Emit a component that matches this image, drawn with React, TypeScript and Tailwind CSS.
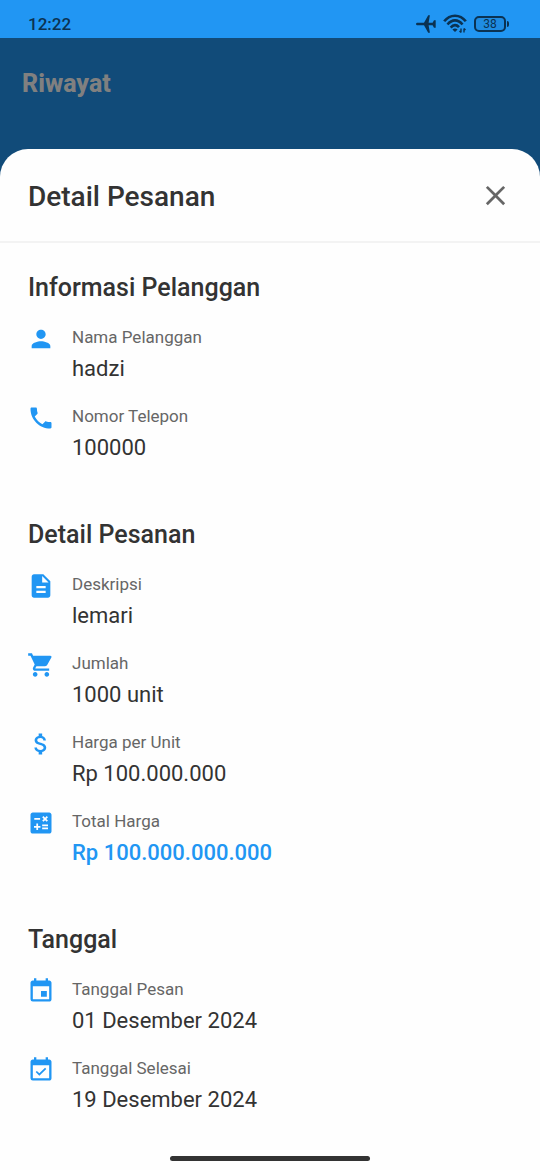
import type { ReactNode } from "react";
import type { IconType } from "react-icons";
import {
  MdAttachMoney,
  MdCalculate,
  MdClose,
  MdDescription,
  MdEvent,
  MdEventAvailable,
  MdPerson,
  MdPhone,
  MdShoppingCart,
} from "react-icons/md";

type Field = {
  icon: IconType;
  label: string;
  value: string;
  highlight?: boolean;
};

const customer: Field[] = [
  { icon: MdPerson, label: "Nama Pelanggan", value: "hadzi" },
  { icon: MdPhone, label: "Nomor Telepon", value: "100000" },
];

const order: Field[] = [
  { icon: MdDescription, label: "Deskripsi", value: "lemari" },
  { icon: MdShoppingCart, label: "Jumlah", value: "1000 unit" },
  { icon: MdAttachMoney, label: "Harga per Unit", value: "Rp 100.000.000" },
  { icon: MdCalculate, label: "Total Harga", value: "Rp 100.000.000.000", highlight: true },
];

const dates: Field[] = [
  { icon: MdEvent, label: "Tanggal Pesan", value: "01 Desember 2024" },
  { icon: MdEventAvailable, label: "Tanggal Selesai", value: "19 Desember 2024" },
];

function StatusBar() {
  return (
    <div className="flex h-[38px] items-center justify-between bg-[#2196f3] pt-[10px] pr-[31px] pl-7 text-[#0b3252]">
      <span className="text-[17px] leading-5 font-medium">12:22</span>
      <div className="flex items-center gap-[7px]">
        <svg className="h-5 w-5" viewBox="0 0 20 20" fill="currentColor" aria-hidden="true">
          <path d="M0 10c0-.8.8-1.300 1.800-1.300H8L12.200 1.200h1.700L12.600 8.700h4L18 6.300h1.700v7.400H18l-1.400-2.400h-4l1.300 7.500h-1.700L8 11.300H1.800C.8 11.300 0 10.800 0 10z" />
        </svg>
        <svg className="h-5 w-6" viewBox="0 0 24 20" fill="none" stroke="currentColor" aria-hidden="true">
          <path d="M1.200 7.300C7-.2 17-.2 22.800 7.300" strokeWidth="2.600" />
          <path d="M4.500 10.500C9 5 15 5 19.500 10.500" strokeWidth="2.600" />
          <path d="M7.700 13.600C10.500 10.400 13.500 10.400 16 13.200" strokeWidth="2.600" />
          <path d="M12 18l-2.600-2.600c1.500-1.200 3.700-1.200 5.200 0z" fill="currentColor" stroke="none" />
          <path d="M18 14.500v4m-1.500-1.500l1.500 1.500M21 18.500v-4m1.500 1.500l-1.500-1.500" strokeWidth="1.400" />
        </svg>
        <div className="flex items-center gap-px">
          <div className="flex h-4 w-8 items-center justify-center rounded-[5px] border-2 border-current bg-[#1f8ce3] text-[12px] leading-3">
            38
          </div>
          <div className="h-[6px] w-[2px] rounded-r-sm bg-current" />
        </div>
      </div>
    </div>
  );
}

function FieldRow({ icon: Icon, label, value, highlight }: Field) {
  return (
    <div className="flex items-start gap-[17px]">
      <Icon className="-mt-[2px] -ml-px size-[28px] shrink-0 text-[#2196f3]" aria-hidden="true" />
      <div className="min-w-0">
        <dt className="text-[17px] leading-5 text-[#666666]">{label}</dt>
        <dd
          className={
            highlight
              ? "mt-[7px] text-[22px] leading-[30px] font-medium text-[#2196f3]"
              : "mt-[7px] text-[22px] leading-[30px] text-[#333333]"
          }
        >
          {value}
        </dd>
      </div>
    </div>
  );
}

function Section({ title, children }: { title: string; children: ReactNode }) {
  return (
    <section>
      <h3 className="text-[25px] leading-[34px] font-medium text-[#333333]">{title}</h3>
      <dl className="mt-[22px] flex flex-col gap-[22px]">{children}</dl>
    </section>
  );
}

export default function App() {
  return (
    <div className="flex min-h-screen flex-col bg-[#114b79] font-['Roboto',sans-serif]">
      <StatusBar />
      <header className="h-[111px] px-[22px] pt-[29px]">
        <h1 className="text-[25px] leading-[34px] font-extrabold text-[#808080]">Riwayat</h1>
      </header>

      <main
        role="dialog"
        aria-labelledby="sheet-title"
        className="flex flex-1 flex-col rounded-t-[28px] bg-[#fefefe]"
      >
        <div className="flex items-start justify-between border-b-2 border-[#f3f3f3] px-7 pt-[30px] pb-[27px]">
          <h2 id="sheet-title" className="text-[28px] leading-[35px] font-medium text-[#333333]">
            Detail Pesanan
          </h2>
          <button type="button" aria-label="Tutup" className="text-[#666666]">
            <MdClose className="size-[33px]" aria-hidden="true" />
          </button>
        </div>

        <div className="flex flex-col gap-[55px] px-7 pt-7">
          <Section title="Informasi Pelanggan">
            {customer.map((f) => (
              <FieldRow key={f.label} {...f} />
            ))}
          </Section>
          <Section title="Detail Pesanan">
            {order.map((f) => (
              <FieldRow key={f.label} {...f} />
            ))}
          </Section>
          <Section title="Tanggal">
            {dates.map((f) => (
              <FieldRow key={f.label} {...f} />
            ))}
          </Section>
        </div>

        <div className="mt-auto flex justify-center pt-6 pb-[9px]">
          <div className="h-[5px] w-[200px] rounded-full bg-[#333333]" />
        </div>
      </main>
    </div>
  );
}
